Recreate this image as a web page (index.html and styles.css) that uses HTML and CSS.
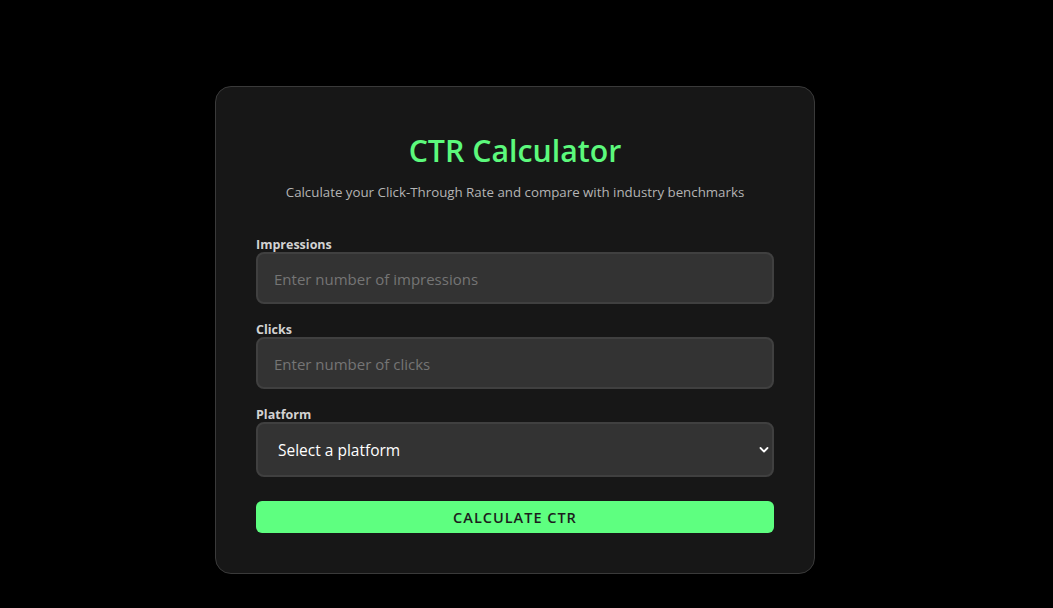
FILE: index.html
```html
<!DOCTYPE html>
<html lang="en">
<head>
<meta charset="utf-8">
<title>CTR Calculator</title>
<link rel="stylesheet" href="styles.css">
</head>
<body>
<div class="page">
  <main class="card">
    <h1 class="title">CTR Calculator</h1>
    <p class="subtitle">Calculate your Click-Through Rate and compare with industry benchmarks</p>
    <form class="form">
      <div class="group">
        <label class="label" for="impressions">Impressions</label>
        <input class="field" id="impressions" type="number" placeholder="Enter number of impressions">
      </div>
      <div class="group">
        <label class="label" for="clicks">Clicks</label>
        <input class="field" id="clicks" type="number" placeholder="Enter number of clicks">
      </div>
      <div class="group group-last">
        <label class="label" for="platform">Platform</label>
        <div class="select-wrap">
          <select class="field select" id="platform">
            <option>Select a platform</option>
            <option>Google Ads</option>
            <option>Facebook Ads</option>
          </select>
          <svg class="chevron" width="10" height="8" viewBox="0 0 10 8" aria-hidden="true"><path d="M1.5 2 L5 5.5 L8.5 2" fill="none" stroke="#ffffff" stroke-width="1.8" stroke-linecap="round" stroke-linejoin="round"/></svg>
        </div>
      </div>
      <button class="btn" type="button">Calculate CTR</button>
    </form>
  </main>
</div>
</body>
</html>
```

FILE: styles.css
```css
html, body {
  margin: 0;
  padding: 0;
  background: #000000;
}
body {
  font-family: "Open Sans", "Noto Sans", "Liberation Sans", sans-serif;
  color: #e0e0e0;
}
.page {
  display: flex;
  justify-content: center;
  padding: 86px 23px 0 0;
}
.card {
  width: 600px;
  box-sizing: border-box;
  background: #171717;
  border: 1px solid #3a3a3a;
  border-radius: 16px;
  padding: 40px 40px 40px;
}
.title {
  margin: 4px 0 0;
  font-size: 30.3px;
  line-height: 40px;
  font-weight: 600;
  color: #5cf97c;
  text-align: center;
}
.subtitle {
  margin: 11px 0 34px;
  font-size: 13.3px;
  line-height: 20px;
  color: #b4b4b4;
  text-align: center;
}
.form {
  display: flex;
  flex-direction: column;
}
.group {
  display: flex;
  flex-direction: column;
  margin-bottom: 17px;
}
.group-last {
  margin-bottom: 24px;
}
.label {
  padding-top: 1px;
  font-size: 12.5px;
  line-height: 15px;
  font-weight: 700;
  color: #d2d2d2;
}
.field {
  box-sizing: border-box;
  width: 100%;
  height: 52px;
  margin: 0;
  padding: 1px 16px 0;
  background: #333333;
  border: 2px solid #404040;
  border-radius: 8px;
  font-family: inherit;
  font-size: 15px;
  color: #ffffff;
  outline: none;
}
.field::placeholder {
  color: #757575;
}
.select-wrap {
  position: relative;
}
.select {
  appearance: none;
  -webkit-appearance: none;
  height: 55px;
  padding: 0 20px;
  font-size: 15.5px;
  color: #ffffff;
}
.chevron {
  position: absolute;
  right: 5px;
  top: 24px;
  pointer-events: none;
}
.btn {
  height: 32px;
  border: none;
  border-radius: 6px;
  background: #5eff80;
  color: #1c1c1c;
  font-family: inherit;
  font-size: 14.5px;
  font-weight: 600;
  letter-spacing: 1px;
  text-transform: uppercase;
  cursor: pointer;
}
```
